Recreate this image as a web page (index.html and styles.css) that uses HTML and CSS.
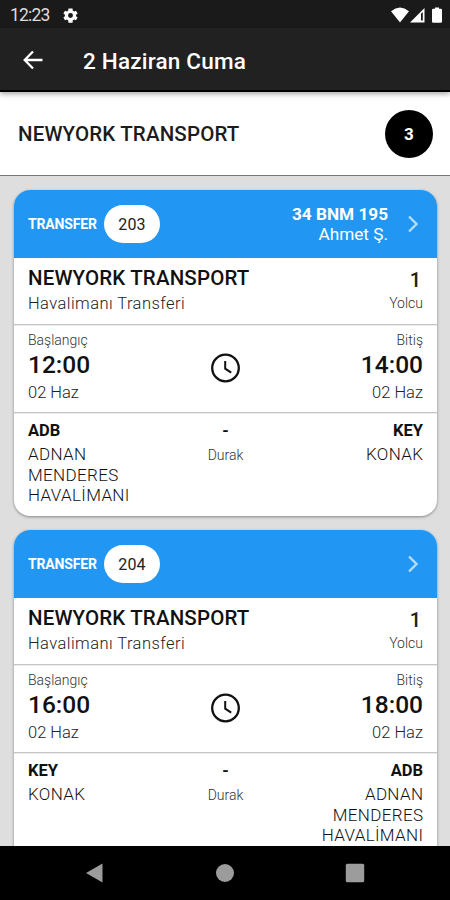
FILE: index.html
```html
<!DOCTYPE html>
<html lang="tr">
<head>
<meta charset="utf-8">
<title>2 Haziran Cuma</title>
<link rel="stylesheet" href="styles.css">
</head>
<body>
<div class="screen">
  <div class="status">
    <span class="clock">12:23</span>
    <svg class="gear" viewBox="2 2 20 20"><path fill="#fff" fill-rule="evenodd" d="M19.4 13a7.500 7.500 0 0 0 0-2l2.100-1.600-2.200-3.800-2.500 1a7.500 7.500 0 0 0-1.700-1L14.700 2.500H9.300L8.900 5.600a7.500 7.500 0 0 0-1.700 1l-2.500-1-2.200 3.800L4.600 11a7.500 7.500 0 0 0 0 2l-2.100 1.600 2.200 3.800 2.500-1a7.500 7.500 0 0 0 1.700 1l.4 3.100h5.400l.4-3.100a7.500 7.500 0 0 0 1.700-1l2.500 1 2.200-3.800zM12 15.300a3.300 3.300 0 1 1 0-6.600 3.300 3.300 0 0 1 0 6.600z"/></svg>
    <svg class="signals" viewBox="0 0 52 17"><g fill="#fff"><path d="M0 4.200Q9 -3.200 18 4.200L9 15.500z"/><path fill-rule="evenodd" d="M33.500 1v14.500H19zM30 6.800v6.700h1.800V5z"/><path d="M41 3q0-1.300 1.300-1.300H44V.5h4v1.200h1.700Q51 1.700 51 3v11.500q0 1.300-1.300 1.300h-7.400Q41 15.800 41 14.500z"/></g></svg>
  </div>
  <header class="appbar">
    <svg class="back" viewBox="0 0 20 20"><path d="M10 1.500L1.700 10l8.300 8.500M1.700 10H19.500" fill="none" stroke="#fff" stroke-width="2.300"/></svg>
    <h1>2 Haziran Cuma</h1>
  </header>
  <div class="company">
    <h2>NEWYORK TRANSPORT</h2>
    <div class="count">3</div>
  </div>
  <main class="list">
    <article class="card">
      <div class="head">
        <span class="kind">TRANSFER</span><span class="pill">203</span>
        <div class="vehicle"><b>34 BNM 195</b><span>Ahmet Ş.</span></div>
        <svg class="chev" viewBox="0 0 10 18"><path d="M1 1.500L8.500 9L1 16.500"/></svg>
      </div>
      <div class="row customer">
        <div><div class="name">NEWYORK TRANSPORT</div><div class="service">Havalimanı Transferi</div></div>
        <div class="end"><div class="pax">1</div><div class="small">Yolcu</div></div>
      </div>
      <div class="row times">
        <div><div class="small">Başlangıç</div><div class="time">12:00</div><div class="date">02 Haz</div></div>
        <svg class="clockicon" viewBox="0 0 30 30"><circle cx="14.500" cy="15" r="13.300"/><path d="M14.200 8v7.700l6 4"/></svg>
        <div class="end"><div class="small">Bitiş</div><div class="time">14:00</div><div class="date">02 Haz</div></div>
      </div>
      <div class="row route">
        <div><div class="code">ADB</div><div class="place">ADNAN<br>MENDERES<br>HAVALİMANI</div></div>
        <div class="mid"><div class="code">-</div><div class="small">Durak</div></div>
        <div class="end"><div class="code">KEY</div><div class="place">KONAK</div></div>
      </div>
    </article>
    <article class="card">
      <div class="head">
        <span class="kind">TRANSFER</span><span class="pill">204</span>
        <div class="vehicle"></div>
        <svg class="chev" viewBox="0 0 10 18"><path d="M1 1.500L8.500 9L1 16.500"/></svg>
      </div>
      <div class="row customer">
        <div><div class="name">NEWYORK TRANSPORT</div><div class="service">Havalimanı Transferi</div></div>
        <div class="end"><div class="pax">1</div><div class="small">Yolcu</div></div>
      </div>
      <div class="row times">
        <div><div class="small">Başlangıç</div><div class="time">16:00</div><div class="date">02 Haz</div></div>
        <svg class="clockicon" viewBox="0 0 30 30"><circle cx="14.500" cy="15" r="13.300"/><path d="M14.200 8v7.700l6 4"/></svg>
        <div class="end"><div class="small">Bitiş</div><div class="time">18:00</div><div class="date">02 Haz</div></div>
      </div>
      <div class="row route">
        <div><div class="code">KEY</div><div class="place">KONAK</div></div>
        <div class="mid"><div class="code">-</div><div class="small">Durak</div></div>
        <div class="end"><div class="code">ADB</div><div class="place">ADNAN<br>MENDERES<br>HAVALİMANI</div></div>
      </div>
    </article>
  </main>
  <nav class="nav">
    <svg viewBox="0 0 20 20"><path d="M1 10L17.500 .5v19z"/></svg>
    <svg viewBox="0 0 20 20"><circle cx="10" cy="10" r="9"/></svg>
    <svg viewBox="0 0 20 20"><rect x=".8" y=".8" width="18.400" height="18.400" rx="1.500"/></svg>
  </nav>
</div>
</body>
</html>
```
FILE: styles.css
```css
* { box-sizing: border-box; margin: 0; padding: 0; }
body { font-family: Roboto, "Liberation Sans", sans-serif; color: #111; }
svg { display: block; flex: none; }
.screen { width: 450px; height: 900px; display: flex; flex-direction: column; overflow: hidden; background: #dedede; }

.status { flex: none; height: 28px; background: #1a1a1a; display: flex; align-items: center; padding: 2px 7px 0 10px; color: #ddd; }
.clock { font-size: 17.5px; line-height: 26px; letter-spacing: -0.8px; width: 53px; }
.gear { width: 15px; height: 15px; }
.signals { width: 52px; height: 17px; margin-left: auto; }

.appbar { flex: none; height: 64px; background: #212121; border-bottom: 2px solid #000; display: flex; align-items: center; padding: 2px 0 0 23px; position: relative; box-shadow: 0 2px 5px rgba(0,0,0,.35); }
.back { width: 20px; height: 20px; margin-right: 40px; }
h1 { font-size: 22.5px; line-height: 30px; font-weight: 500; color: #fff; letter-spacing: .2px; padding-top: 2px; }

.company { flex: none; height: 84px; background: #fff; border-bottom: 1px solid #777; display: flex; align-items: center; justify-content: space-between; padding: 0 17px 0 18px; }
h2 { font-size: 20.500px; line-height: 26px; font-weight: 500; letter-spacing: .15px; color: #1c1c1c; }
.count { width: 48px; height: 48px; border-radius: 50%; background: #000; color: #fff; text-align: center; font-weight: 700; font-size: 17px; line-height: 48px; }

.list { flex: 1; min-height: 0; overflow: hidden; padding: 14px 13px 0 14px; display: flex; flex-direction: column; gap: 14px; }
.card { flex: none; background: #fff; border-radius: 16px; box-shadow: 0 1px 3px rgba(0,0,0,.4); overflow: hidden; height: 326px; }
.card:last-child { height: 340px; }
.head { height: 68px; background: #2196f3; display: flex; align-items: center; padding: 0 19px 0 14px; color: #fff; }
.kind { font-size: 14px; font-weight: 700; width: 76px; letter-spacing: -.15px; }
.pill { width: 56px; height: 38px; border-radius: 19px; background: #fff; color: #222; font-size: 16px; line-height: 39px; text-align: center; letter-spacing: .2px; }
.vehicle { margin-left: auto; margin-right: 20px; display: flex; flex-direction: column; text-align: right; font-size: 17.2px; line-height: 20.500px; }
.chev { width: 10px; height: 18px; fill: none; stroke: #b6dcfb; stroke-width: 2.300; }

.row { display: flex; justify-content: space-between; padding: 0 14px; }
.customer { height: 66px; padding-top: 7px; }
.times, .route { border-top: 1px solid #c6c6c6; box-shadow: inset 0 1px 0 #ececec; }
.times { height: 88px; padding-top: 7px; }
.route { padding-top: 8px; }
.row > div { flex: 1; }
.customer > div:first-child { flex: 3; }
.end { text-align: right; }
.mid { text-align: center; }
.name { font-size: 20.500px; line-height: 26px; font-weight: 500; letter-spacing: .15px; white-space: nowrap; }
.service { font-size: 16.5px; line-height: 25px; font-weight: 300; letter-spacing: .44px; color: #222; }
.pax { font-size: 20px; line-height: 30px; font-weight: 500; color: #222; padding-right: 2px; }
.small { font-size: 14px; line-height: 16px; font-weight: 300; color: #333; }
.time { font-size: 24.5px; line-height: 34px; font-weight: 500; }
.date { font-size: 16.5px; line-height: 22px; font-weight: 300; color: #222; }
.clockicon { width: 30px; height: 30px; margin-top: 21px; fill: none; stroke: #111; stroke-width: 2.300; }
.clockicon path { stroke-width: 2; }
.code { font-size: 16.500px; line-height: 20px; font-weight: 700; margin-bottom: 3px; }
.place { font-size: 17px; line-height: 20.600px; font-weight: 300; color: #111; letter-spacing: .35px; }
.end .place { margin-right: -.35px; }
.mid .small { padding-top: 3px; }

.nav { flex: none; height: 54px; background: #000; display: flex; justify-content: space-between; align-items: center; padding: 0 85px; fill: #9c9c9c; position: relative; }
.nav svg { width: 20px; height: 20px; }
```
